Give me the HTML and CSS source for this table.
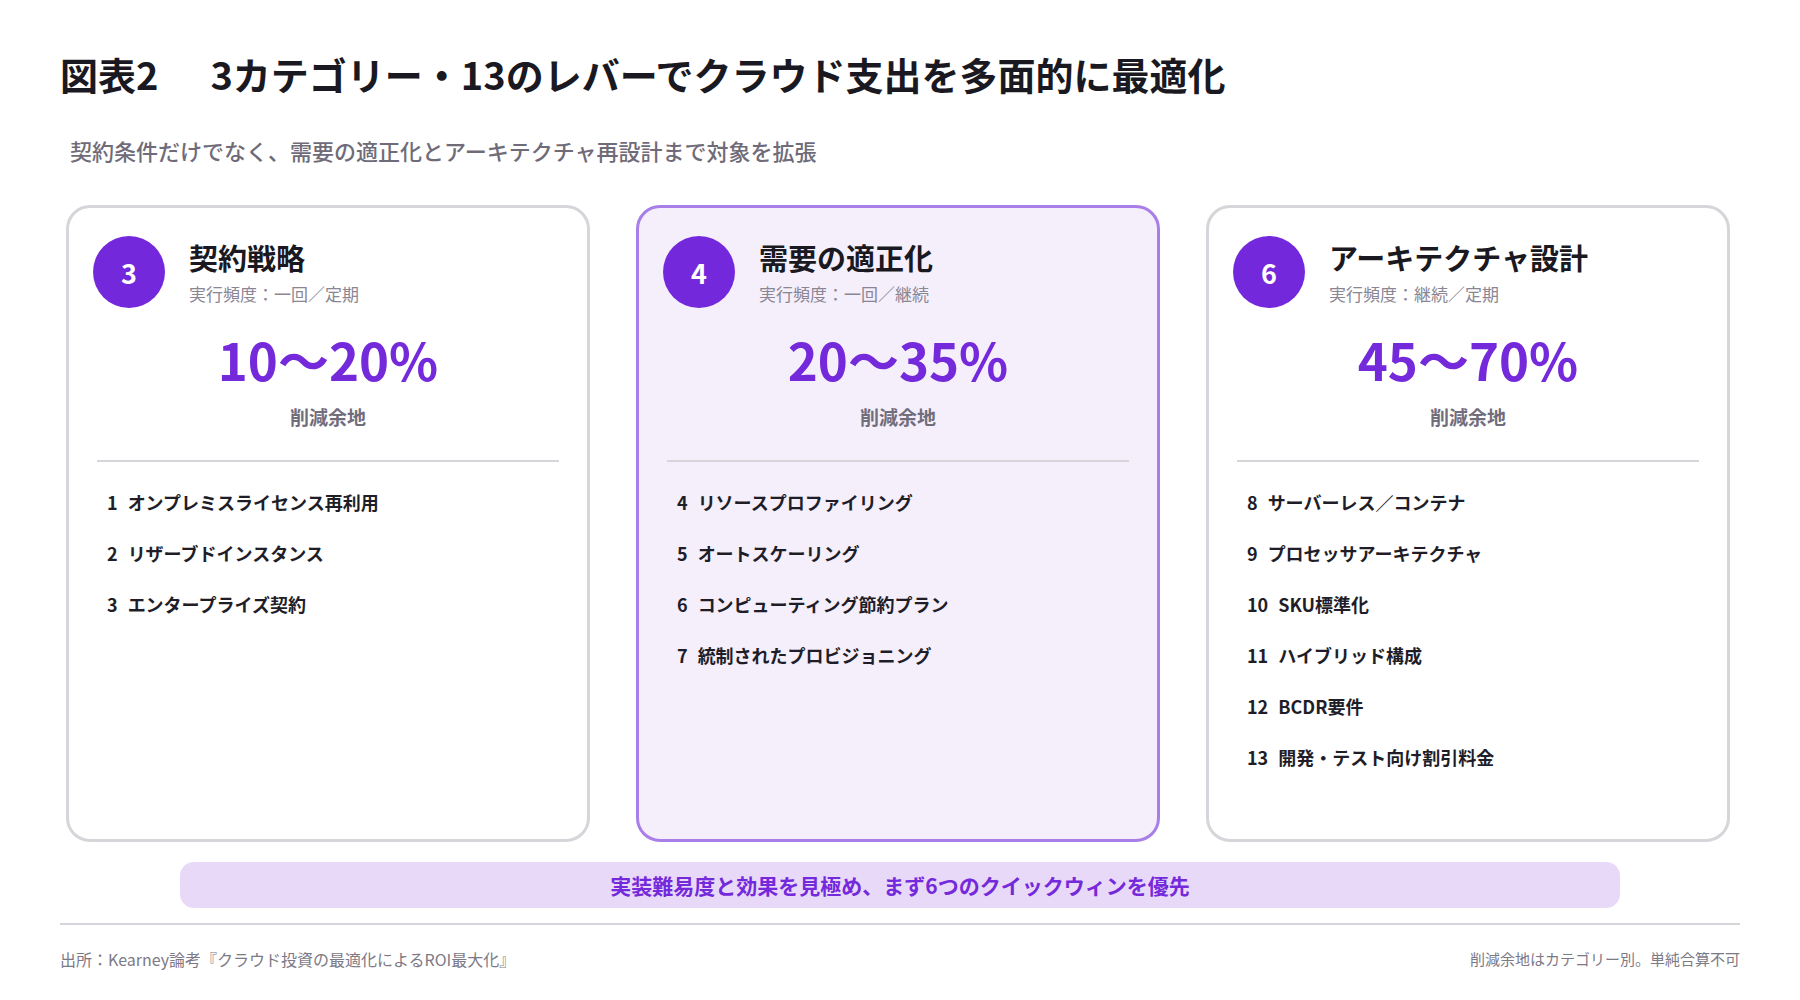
FILE: index.html
```html
<!DOCTYPE html>
<html lang="ja">
<head>
<meta charset="utf-8">
<title>図表2</title>
<link rel="stylesheet" href="styles.css">
</head>
<body>
<div class="page">
  <h1 class="title"><span class="fig">図表2</span>3カテゴリー・13のレバーでクラウド支出を多面的に最適化</h1>
  <p class="subtitle">契約条件だけでなく、需要の適正化とアーキテクチャ再設計まで対象を拡張</p>

  <div class="cards">
    <section class="card">
      <div class="card-head">
        <div class="badge">3</div>
        <div class="head-text">
          <h2 class="card-title">契約戦略</h2>
          <div class="meta">実行頻度：一回／定期</div>
        </div>
      </div>
      <div class="pct">10～20%</div>
      <div class="pct-label">削減余地</div>
      <hr class="divider">
      <ul class="levers">
        <li><span class="num">1</span><span>オンプレミスライセンス再利用</span></li>
        <li><span class="num">2</span><span>リザーブドインスタンス</span></li>
        <li><span class="num">3</span><span>エンタープライズ契約</span></li>
      </ul>
    </section>

    <section class="card card-accent">
      <div class="card-head">
        <div class="badge">4</div>
        <div class="head-text">
          <h2 class="card-title">需要の適正化</h2>
          <div class="meta">実行頻度：一回／継続</div>
        </div>
      </div>
      <div class="pct">20～35%</div>
      <div class="pct-label">削減余地</div>
      <hr class="divider">
      <ul class="levers">
        <li><span class="num">4</span><span>リソースプロファイリング</span></li>
        <li><span class="num">5</span><span>オートスケーリング</span></li>
        <li><span class="num">6</span><span>コンピューティング節約プラン</span></li>
        <li><span class="num">7</span><span>統制されたプロビジョニング</span></li>
      </ul>
    </section>

    <section class="card">
      <div class="card-head">
        <div class="badge">6</div>
        <div class="head-text">
          <h2 class="card-title">アーキテクチャ設計</h2>
          <div class="meta">実行頻度：継続／定期</div>
        </div>
      </div>
      <div class="pct">45～70%</div>
      <div class="pct-label">削減余地</div>
      <hr class="divider">
      <ul class="levers">
        <li><span class="num">8</span><span>サーバーレス／コンテナ</span></li>
        <li><span class="num">9</span><span>プロセッサアーキテクチャ</span></li>
        <li><span class="num">10</span><span>SKU標準化</span></li>
        <li><span class="num">11</span><span>ハイブリッド構成</span></li>
        <li><span class="num">12</span><span>BCDR要件</span></li>
        <li><span class="num">13</span><span>開発・テスト向け割引料金</span></li>
      </ul>
    </section>
  </div>

  <div class="banner">実装難易度と効果を見極め、まず6つのクイックウィンを優先</div>

  <hr class="rule">

  <footer class="footer">
    <span class="source">出所：Kearney論考『クラウド投資の最適化によるROI最大化』</span>
    <span class="note">削減余地はカテゴリー別。単純合算不可</span>
  </footer>
</div>
</body>
</html>
```

FILE: styles.css
```css
* {
  box-sizing: border-box;
}

html, body {
  margin: 0;
  padding: 0;
  background: #ffffff;
}

body {
  font-family: "Noto Sans CJK JP", "Noto Sans", sans-serif;
  color: #1b1a22;
}

.page {
  width: 1800px;
  height: 1000px;
  padding: 49px 60px 0 60px;
}

.title {
  margin: 0;
  font-size: 38px;
  line-height: 50px;
  font-weight: 700;
  color: #1a1921;
  white-space: nowrap;
}

.fig {
  margin-right: 52px;
}

.subtitle {
  margin: 35px 0 0 0;
  padding-left: 10px;
  font-size: 22px;
  line-height: 32px;
  font-weight: 500;
  color: #6f6b78;
}

.cards {
  display: grid;
  grid-template-columns: repeat(3, 1fr);
  gap: 46px;
  margin-top: 39px;
  padding: 0 10px 0 6px;
}

.card {
  height: 637px;
  border: 3px solid #d6d5da;
  border-radius: 24px;
  background: #ffffff;
  padding: 28px 24px 27px 24px;
}

.card-accent {
  border-color: #a87fe8;
  background: #f5effc;
}

.card-head {
  display: flex;
  align-items: center;
  gap: 24px;
}

.badge {
  flex: none;
  width: 72px;
  height: 72px;
  border-radius: 50%;
  background: #7428db;
  color: #ffffff;
  font-size: 27px;
  font-weight: 700;
  display: flex;
  align-items: center;
  justify-content: center;
}

.head-text {
  display: flex;
  flex-direction: column;
  gap: 8px;
}

.card-title {
  margin: 0;
  font-size: 29px;
  line-height: 36px;
  font-weight: 700;
  color: #1a1921;
}

.meta {
  font-size: 17px;
  line-height: 22px;
  color: #8a8694;
}

.pct {
  margin-top: 20px;
  text-align: center;
  font-size: 51px;
  line-height: 62px;
  font-weight: 700;
  color: #7429db;
}

.pct-label {
  margin-top: 14px;
  text-align: center;
  font-size: 19px;
  line-height: 26px;
  font-weight: 700;
  color: #716d7b;
}

.divider {
  border: none;
  height: 2px;
  background: #d6d5da;
  margin: 30px 4px 0 4px;
}

.levers {
  list-style: none;
  margin: 28px 0 0 0;
  padding: 0 0 0 14px;
  display: flex;
  flex-direction: column;
  gap: 27px;
}

.levers li {
  display: flex;
  gap: 10px;
  font-size: 18px;
  line-height: 24px;
  font-weight: 700;
  color: #1f1e28;
}

.banner {
  margin: 20px 120px 0 120px;
  height: 46px;
  border-radius: 14px;
  background: #e8d9f8;
  color: #7429db;
  font-size: 21px;
  font-weight: 700;
  display: flex;
  align-items: center;
  justify-content: center;
}

.rule {
  border: none;
  height: 2px;
  background: #d6d5da;
  margin: 15px 0 0 0;
}

.footer {
  margin-top: 23px;
  display: flex;
  justify-content: space-between;
  align-items: center;
  line-height: 22px;
  color: #7d7986;
}

.source {
  font-size: 16px;
}

.note {
  font-size: 15px;
}
```
